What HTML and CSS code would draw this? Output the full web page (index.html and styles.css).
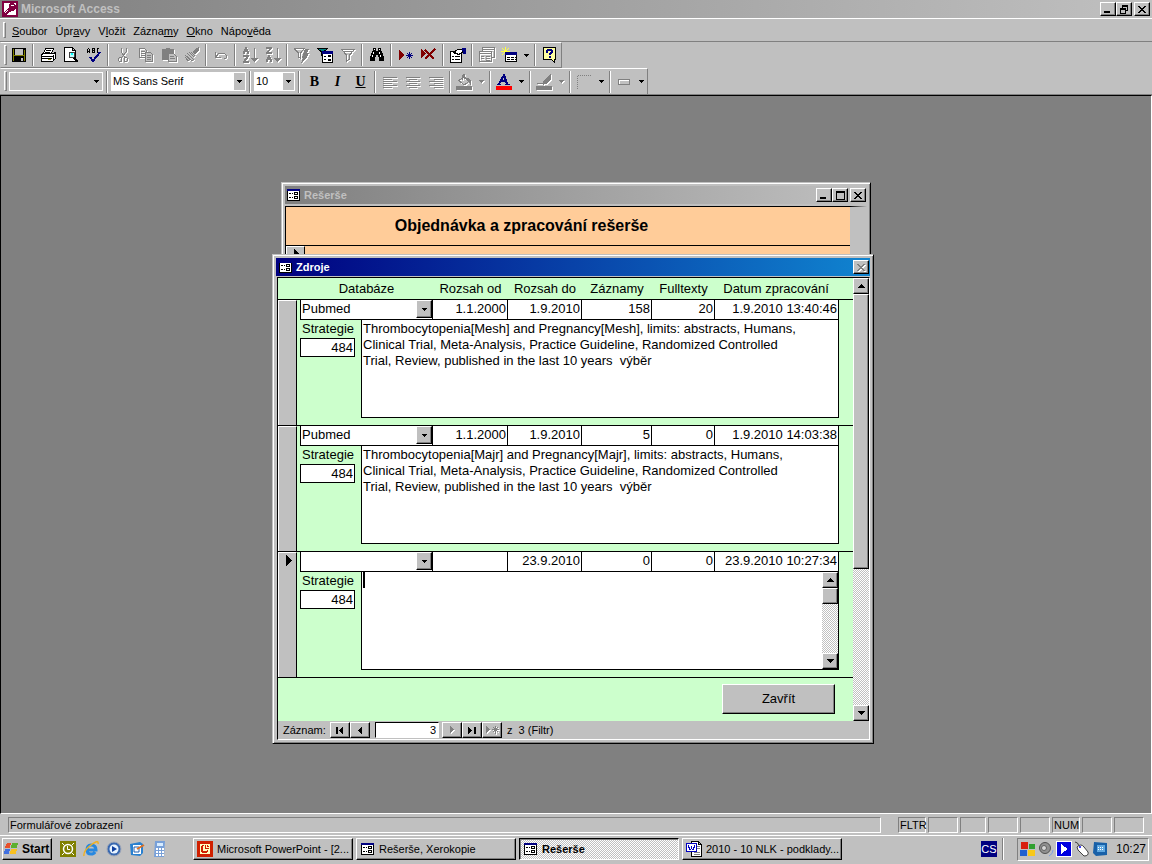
FILE: index.html
```html
<!DOCTYPE html>
<html lang="cs">
<head>
<meta charset="utf-8">
<title>Microsoft Access</title>
<link rel="stylesheet" href="styles.css">
</head>
<body>
<svg class="defs" aria-hidden="true">
  <symbol id="form" viewBox="0 0 13 12"><path fill="#fff" d="M0 0h13v12H0z"/><path fill="#000080" d="M0 0h13v2H0z"/><path fill="none" stroke="#000" d="M.5 2v9.500h12V2M7.500 3.500h3v2h-3zM7.500 7.500h3v2h-3zM2 4.500h2M5 4.500h1M2 8.500h2M5 8.500h1"/></symbol>
  <symbol id="down" viewBox="0 0 5 3"><path d="M0 0h5v1H4v1H3v1H2V2H1V1H0z"/></symbol>
  <symbol id="up" viewBox="0 0 7 4"><path d="M3 0h1v1h1v1h1v1h1v1H0V3h1V2h1V1h1z"/></symbol>
  <symbol id="sdown" viewBox="0 0 7 4"><path d="M0 0h7v1H6v1H5v1H4v1H3V3H2V2H1V1H0z"/></symbol>
  <symbol id="close" viewBox="0 0 8 7"><path d="M0 0h2v1h1v1h2V1h1V0h2v1H7v1H6v1H5v1h1v1h1v1h1v1H6V6H5V5H3v1H2v1H0V6h1V5h1V4h1V3H2V2H1V1H0z"/></symbol>
  <symbol id="min" viewBox="0 0 8 7"><path d="M0 5h6v2H0z"/></symbol>
  <symbol id="max" viewBox="0 0 9 9"><path fill-rule="evenodd" d="M0 0h9v9H0zM1 2v6h7V2z"/></symbol>
  <symbol id="restore" viewBox="0 0 8 9"><path fill-rule="evenodd" d="M2 0h6v6H6v3H0V3h2zM3 2v1h3v2h1V2zM1 5v3h4V5z"/></symbol>
  <symbol id="tri" viewBox="0 0 6 11"><path d="M0 0h1v1h1v1h1v1h1v1h1v1h1v1H5v1H4v1H3v1H2v1H1v1H0z"/></symbol>
  <symbol id="funnel" viewBox="0 0 16 16"><path fill="none" stroke="currentColor" d="M1.500 2.500h13l-5 5.500v4l-3 2V8zM4 4.500h8"/></symbol>
</svg>

<header class="titlebar appbar">
  <svg class="i16" viewBox="0 0 16 16"><path fill="#800040" d="M0 0h16v16H0z"/><path fill="#fff" d="M2 2h12v12H2z"/><path fill="#800040" d="M8 2h4v1h1v1h1v4h-1v1h-1v1H9v1H7v1H6v1H5v1H2v-3h1v-1h1V9h1V8h1V7h1V3h1z"/><path fill="#fff" d="M9 4h3v1H9zM3 11h1v1H3zM4 10h1v1H4zM5 9h1v1H5z"/></svg>
  <h1>Microsoft Access</h1>
  <span class="wbtns"><button aria-label="Minimalizovat"><svg width="8" height="7"><use href="#min"/></svg></button><button aria-label="Obnovit"><svg width="8" height="9"><use href="#restore"/></svg></button><button class="last" aria-label="Zavřít aplikaci"><svg width="8" height="7"><use href="#close"/></svg></button></span>
</header>

<nav class="menubar"><i class="grip"></i>
  <button><u>S</u>oubor</button><button>Úpr<u>a</u>vy</button><button>V<u>l</u>ožit</button><button>Zázna<u>m</u>y</button><button><u>O</u>kno</button><button>Nápo<u>v</u>ěda</button>
</nav>

<div class="dock">
<div class="toolbar std"><i class="grip"></i>
  <button class="tb" aria-label="Uložit"><svg viewBox="0 0 16 16"><path d="M1 1h14v14H1z"/><path fill="#808000" d="M2 2h1v12H2zM13 3h1v11h-1zM3 8h10v1H3z"/><path fill="#c0c0c0" d="M4 2h8v6H4zM10 11h2v3h-2z"/></svg></button><i class="sep"></i>
  <button class="tb" aria-label="Tisk"><svg viewBox="0 0 16 16"><path fill="#fff" stroke="#000" d="M5.500 1.500h8l-2 5h-8zM1.500 7.500l2-1h10l2-1v6l-3 3h-11z"/><path stroke="#000" d="M6 3.500h5M5 5.500h5M1 9.500h12M2 11.500h10M13 8v6M15 7v4"/><path stroke="#808000" d="M8 12.500h3"/></svg></button>
  <button class="tb" aria-label="Náhled"><svg viewBox="0 0 16 16"><path fill="#fff" stroke="#000" d="M1.500.5h8l3 3v11h-11zM9.500.5v3h3"/><circle cx="9" cy="8" r="3" fill="#c0ffff" stroke="#404040"/><path stroke="#000" stroke-width="2" d="M11 11l4 4"/><path fill="#0ff" d="M8 6h2v2H8z"/></svg></button>
  <button class="tb" aria-label="Pravopis"><svg viewBox="0 0 16 16"><path fill="none" stroke="#000" d="M1.500 6V2.500l1-1 1 1V6M2 4.500h1M6.500 1v4.500h2v-4h-2M6 3.500h2M13 1.500h-2v4h2"/><path fill="none" stroke="#000080" stroke-width="2" d="M4 10l3 4 7-9"/></svg></button><i class="sep"></i>
  <button class="tb off" disabled aria-label="Vyjmout"><svg viewBox="0 0 16 16"><path fill="none" stroke="#808080" d="M6 1v4l4 5M11 1v4l-4 5M4.500 10.500h2v4h-2l-1-1v-2zM9.500 10.500h2l1 1v2l-1 1h-2z"/></svg></button>
  <button class="tb off" disabled aria-label="Kopírovat"><svg viewBox="0 0 16 16"><path fill="none" stroke="#808080" d="M1.500 1.500h5l2 2v7h-7zM3 4.500h4M3 6.500h4M3 8.500h4"/><path fill="#c0c0c0" stroke="#808080" d="M7.500 5.500h5l2 2v7h-7zM9 8.500h4M9 10.500h4M9 12.500h4"/></svg></button>
  <button class="tb off" disabled aria-label="Vložit"><svg viewBox="0 0 16 16"><path fill="#808080" d="M1 2h4V1h4v1h4v11H1z"/><path fill="#c0c0c0" stroke="#808080" d="M7.500 6.500h5l3 3v5h-8zM9 9.500h4M9 11.500h5M4 3.500h6"/></svg></button>
  <button class="tb off" disabled aria-label="Kopírovat formát"><svg viewBox="0 0 16 16"><path fill="#808080" d="M12 1l3-1v3l-4 5-3-3z"/><path fill="none" stroke="#808080" d="M3 6l6 6M1 8l7 6M5 5l5 5M1 10l4 4M2 12l3 2M7 5l4 4M8 14l2-2"/></svg></button><i class="sep"></i>
  <button class="tb off" disabled aria-label="Zpět"><svg viewBox="0 0 16 16"><path fill="none" stroke="#808080" d="M2.500 5v5.500h5M3 10l3-4h5l2 2v3l-2 1"/></svg></button><i class="sep"></i>
  <button class="tb off" disabled aria-label="Seřadit vzestupně"><svg viewBox="0 0 16 16"><path fill="#808080" d="M3 0h2v2h1v2h1v3H5V5H3v2H1V4h1V2h1zM1 8h6v2H6v2H5v1H4v1h3v2H1v-2h1v-2h1v-1h1v-1H1zM12 1h1v10h3v1h-1v1h-1v1h-1v1h-1v-1h-1v-1h-1v-1H9v-1h3z"/></svg></button>
  <button class="tb off" disabled aria-label="Seřadit sestupně"><svg viewBox="0 0 16 16"><path fill="#808080" d="M1 0h6v2H6v1H5v1H4v1h3v2H1V5h1V4h1V3h1V2H1zM3 8h2v2h1v2h1v3H5v-2H3v2H1v-3h1v-2h1zM12 1h1v10h3v1h-1v1h-1v1h-1v1h-1v-1h-1v-1h-1v-1H9v-1h3z"/></svg></button><i class="sep"></i>
  <button class="tb off" disabled aria-label="Filtr podle výběru"><svg viewBox="0 0 16 16"><path fill="none" stroke="#808080" d="M0 1.500h10L6.500 6v5l-2-1V6z"/><path fill="#808080" d="M11 2h4l-2 4h2l-2 4-6 6 2-5H8z"/></svg></button>
  <button class="tb" aria-label="Filtr podle formuláře"><svg viewBox="0 0 16 16"><path fill="#008080" stroke="#000" d="M.5 1.500h10L6.500 5v4l-2-1V5z"/><path fill="#fff" stroke="#000" d="M5.500 5.500h10v10h-10z"/><path fill="#000080" d="M5 4h11v3H5z"/><path fill="none" stroke="#000" d="M7 9.500h2M7 12.500h2M11.500 8.500h2v1h-2zM11.500 12.500h2v1h-2z"/></svg></button>
  <button class="tb off" disabled aria-label="Použít filtr"><svg viewBox="0 0 16 16"><use href="#funnel"/></svg></button><i class="sep"></i>
  <button class="tb" aria-label="Najít"><svg viewBox="0 0 16 16"><path d="M4 1h3v3h2V1h3v3h1v2h1v3h1v5h-5v-4H9V8H7v2H6v4H1V9h1V6h1V4h1z"/><path fill="#fff" d="M4 5h1v2H4zM3 8h1v2H3zM10 5h1v2h-1zM11 8h1v2h-1zM5 2h1v1H5zM10 2h1v1h-1z"/></svg></button><i class="sep"></i>
  <button class="tb" aria-label="Nový záznam"><svg viewBox="0 0 16 16"><path fill="#800000" d="M1 3l5 5-5 5z"/><path stroke="#000080" d="M11.500 5v7M8 8.500h7M9 6l5 5M14 6l-5 5"/></svg></button>
  <button class="tb" aria-label="Odstranit záznam"><svg viewBox="0 0 16 16"><path fill="#800000" d="M0 2l5 5-5 4z"/><path fill="none" stroke="#800000" stroke-width="2" d="M4 3l9 9M14 2L4 12"/></svg></button><i class="sep"></i>
  <button class="tb" aria-label="Vlastnosti"><svg viewBox="0 0 16 16"><path fill="#fff" stroke="#000" d="M.5 4.500h11v11H.5z"/><path stroke="#000" d="M2 9.500h2M5 9.500h5M2 12.500h2M5 12.500h5M3 6l4-3 4 1-3 4"/><path fill="#fff" stroke="#000" d="M4.500 5.500l3-3h5v3l-4 2z"/><path fill="#000080" d="M12 1h4v6h-3z"/></svg></button><i class="sep"></i>
  <button class="tb off" disabled aria-label="Okno databáze"><svg viewBox="0 0 16 16"><path fill="none" stroke="#808080" d="M3.500 4V.5h12v10H13M4 2.500h11M.5 4.500h12v10H.5zM1 6.500h11M2 9.500h3M2 11.500h3M7 9.500h4M7 11.500h4M7 13.500h4"/></svg></button>
  <button class="tb wide" aria-label="Nový objekt"><svg viewBox="0 0 16 16"><path stroke="#ffff40" d="M4.500 0v9M0 4.500h9M1 1l7 7M8 1L1 8"/><path fill="#fff" stroke="#000" d="M4.500 5.500h11v9h-11z"/><path fill="#000080" d="M4 5h12v3H4z"/><path stroke="#000" stroke-dasharray="3 1" d="M6 10.500h9M6 12.500h9"/></svg><svg class="dd"><use href="#down"/></svg></button><i class="sep"></i>
  <button class="tb" aria-label="Nápověda"><svg viewBox="0 0 16 16"><path fill="#ffffa0" stroke="#000" d="M1.500.5h12v12h-1v3l-3-3h-8z"/><path fill="#000080" d="M4 3h1V2h5v1h1v3h-1v1H9v1H7V6h1V5h1V4H6v2H4zM7 9h2v2H7z"/></svg></button>
</div>
<div class="toolbar fmt"><i class="grip"></i>
  <span class="cb style"><select disabled aria-label="Objekt"><option></option></select><svg class="dd"><use href="#down"/></svg></span><i class="sep"></i>
  <span class="cb font"><select aria-label="Písmo"><option>MS Sans Serif</option></select><svg class="dd"><use href="#down"/></svg></span><i class="sep"></i>
  <span class="cb size"><select aria-label="Velikost písma"><option>10</option></select><svg class="dd"><use href="#down"/></svg></span><i class="sep"></i>
  <button class="tb glyph">B</button><button class="tb glyph it">I</button><button class="tb glyph un">U</button><i class="sep"></i>
  <button class="tb off" disabled aria-label="Vlevo"><svg viewBox="0 0 16 16"><path stroke="#808080" d="M1 3.500h14M1 5.500h9M1 7.500h14M1 9.500h9M1 11.500h14M1 13.500h9"/></svg></button>
  <button class="tb off" disabled aria-label="Na střed"><svg viewBox="0 0 16 16"><path stroke="#808080" d="M1 3.500h14M4 5.500h8M1 7.500h14M4 9.500h8M1 11.500h14M4 13.500h8"/></svg></button>
  <button class="tb off" disabled aria-label="Vpravo"><svg viewBox="0 0 16 16"><path stroke="#808080" d="M1 3.500h14M6 5.500h9M1 7.500h14M6 9.500h9M1 11.500h14M6 13.500h9"/></svg></button><i class="sep"></i>
  <button class="tb wide off" disabled aria-label="Barva výplně"><svg viewBox="0 0 16 16"><path fill="#808080" d="M0 12h16v4H0zM11 4h2l2 3v4h-1l-1-4z"/><path fill="none" stroke="#808080" d="M3 6.500l5-4 5 5-5 3.500zM6.500 6V1.500l2-1V5"/></svg><svg class="dd"><use href="#down"/></svg></button><i class="sep"></i>
  <button class="tb wide" aria-label="Barva písma"><svg viewBox="0 0 16 16"><path fill="red" d="M0 12h16v4H0z"/><path fill="none" stroke="#000080" stroke-width="2" d="M3 10l5-9 3 9M5 7h5"/><path stroke="#000080" d="M1 10.500h4M9 10.500h5"/></svg><svg class="dd"><use href="#down"/></svg></button><i class="sep"></i>
  <button class="tb wide off" disabled aria-label="Barva čáry"><svg viewBox="0 0 16 16"><path fill="#808080" d="M0 12h16v4H0zM15 0v5l-5 5H7V8l5-6z"/><path fill="none" stroke="#808080" d="M1 9.500h5l2 1"/></svg><svg class="dd"><use href="#down"/></svg></button><i class="sep"></i>
  <button class="tb wide" aria-label="Ohraničení"><svg viewBox="0 0 16 16"><path fill="none" stroke="#808080" stroke-dasharray="1 1" d="M1.500 15V1.500H15"/></svg><svg class="dd"><use href="#down"/></svg></button><i class="sep"></i>
  <button class="tb wide" aria-label="Zvláštní efekt"><svg viewBox="0 0 16 16"><path fill="none" stroke="#fff" d="M3.500 6.500h10v4h-10z"/><path fill="none" stroke="#808080" d="M2.500 5.500h11v5h-11z"/></svg><svg class="dd"><use href="#down"/></svg></button>
</div>
</div>

<main class="mdi">
  <section class="win back" aria-label="Rešerše">
    <div class="titlebar">
      <svg class="ficon"><use href="#form"/></svg><h2>Rešerše</h2>
      <span class="wbtns"><button aria-label="Minimalizovat okno"><svg width="8" height="7"><use href="#min"/></svg></button><button aria-label="Maximalizovat okno"><svg width="9" height="9"><use href="#max"/></svg></button><button class="last" aria-label="Zavřít okno"><svg width="8" height="7"><use href="#close"/></svg></button></span>
    </div>
    <div class="client orange">
      <h3>Objednávka a zpracování rešerše</h3>
      <div class="detail"><span class="selector"><svg width="6" height="11"><use href="#tri"/></svg></span></div>
    </div>
  </section>

  <section class="win front" aria-label="Zdroje">
    <div class="titlebar active">
      <svg class="ficon"><use href="#form"/></svg><h2>Zdroje</h2>
      <span class="wbtns"><button class="last off" disabled aria-label="Zavřít okno Zdroje"><svg width="8" height="7"><use href="#close"/></svg></button></span>
    </div>
    <div class="client">
      <div class="body">
        <div class="form">
          <div class="heads"><span>Databáze</span><span>Rozsah od</span><span>Rozsah do</span><span>Záznamy</span><span>Fulltexty</span><span>Datum zpracování</span></div>
          <article class="record">
            <span class="selector"></span>
            <div class="fields">
              <div class="cells">
                <span class="combo"><select aria-label="Databáze"><option>Pubmed</option></select><b><svg class="dd"><use href="#down"/></svg></b></span>
                <input aria-label="Rozsah od" value="1.1.2000"><input aria-label="Rozsah do" value="1.9.2010"><input aria-label="Záznamy" value="158"><input aria-label="Fulltexty" value="20"><input aria-label="Datum zpracování" value="1.9.2010 13:40:46">
              </div>
              <div class="strategy">
                <div class="side"><label for="s1">Strategie</label><input id="s1" value="484"></div>
                <div class="memo"><textarea aria-label="Text strategie" wrap="off">Thrombocytopenia[Mesh] and Pregnancy[Mesh], limits: abstracts, Humans,
Clinical Trial, Meta-Analysis, Practice Guideline, Randomized Controlled
Trial, Review, published in the last 10 years  výběr</textarea></div>
              </div>
            </div>
          </article>
          <article class="record">
            <span class="selector"></span>
            <div class="fields">
              <div class="cells">
                <span class="combo"><select aria-label="Databáze"><option>Pubmed</option></select><b><svg class="dd"><use href="#down"/></svg></b></span>
                <input aria-label="Rozsah od" value="1.1.2000"><input aria-label="Rozsah do" value="1.9.2010"><input aria-label="Záznamy" value="5"><input aria-label="Fulltexty" value="0"><input aria-label="Datum zpracování" value="1.9.2010 14:03:38">
              </div>
              <div class="strategy">
                <div class="side"><label for="s2">Strategie</label><input id="s2" value="484"></div>
                <div class="memo"><textarea aria-label="Text strategie" wrap="off">Thrombocytopenia[Majr] and Pregnancy[Majr], limits: abstracts, Humans,
Clinical Trial, Meta-Analysis, Practice Guideline, Randomized Controlled
Trial, Review, published in the last 10 years  výběr</textarea></div>
              </div>
            </div>
          </article>
          <article class="record">
            <span class="selector"><svg width="6" height="11"><use href="#tri"/></svg></span>
            <div class="fields">
              <div class="cells">
                <span class="combo"><select aria-label="Databáze"><option></option></select><b><svg class="dd"><use href="#down"/></svg></b></span>
                <input aria-label="Rozsah od" value=""><input aria-label="Rozsah do" value="23.9.2010"><input aria-label="Záznamy" value="0"><input aria-label="Fulltexty" value="0"><input aria-label="Datum zpracování" value="23.9.2010 10:27:34">
              </div>
              <div class="strategy">
                <div class="side"><label for="s3">Strategie</label><input id="s3" value="484"></div>
                <div class="memo"><i class="caret"></i><textarea aria-label="Text strategie"></textarea>
                  <div class="scroll"><button aria-label="Nahoru"><svg width="7" height="4"><use href="#up"/></svg></button><span class="thumb short"></span><button class="end" aria-label="Dolů"><svg width="7" height="4"><use href="#sdown"/></svg></button></div>
                </div>
              </div>
            </div>
          </article>
          <footer class="foot"><button>Zavřít</button></footer>
        </div>
        <div class="scroll"><button aria-label="Posun nahoru"><svg width="7" height="4"><use href="#up"/></svg></button><span class="thumb long"></span><button class="end" aria-label="Posun dolů"><svg width="7" height="4"><use href="#sdown"/></svg></button></div>
      </div>
      <div class="recnav">
        <label for="rec">Záznam:</label>
        <button aria-label="První"><svg width="8" height="7"><path d="M0 0h2v7H0zM7 0v7H6V6H5V5H4V4H3V3h1V2h1V1h1V0z"/></svg></button><button aria-label="Předchozí"><svg width="4" height="7"><path d="M4 0v7H3V6H2V5H1V4H0V3h1V2h1V1h1V0z"/></svg></button>
        <input id="rec" value="3">
        <button class="off" disabled aria-label="Další"><svg width="5" height="8"><path d="M0 0h1v1h1v1h1v1h1v1H3v1H2v1H1v1H0z"/></svg></button><button aria-label="Poslední"><svg width="8" height="7"><path d="M6 0h2v7H6zM0 0h1v1h1v1h1v1h1v1H3v1H2v1H1v1H0z"/></svg></button><button class="off" disabled aria-label="Nový"><svg width="13" height="8"><path d="M0 0h1v1h1v1h1v1h1v1H3v1H2v1H1v1H0z"/><path stroke="#808080" d="M9.500 0v8M6 3.500h7M7 1l5 5M12 1L7 6"/></svg></button>
        <span class="total">z&nbsp; 3 (Filtr)</span>
      </div>
    </div>
  </section>
</main>

<div class="status"><span class="msg">Formulářové zobrazení</span><span class="ind w28">FLTR</span><span class="ind w30"></span><span class="ind w26"></span><span class="ind w30"></span><span class="ind w30"></span><span class="ind w28">NUM</span><span class="ind w30"></span><span class="ind w30"></span></div>

<footer class="taskbar">
  <button class="start"><svg class="i16" viewBox="0 0 16 16"><path fill="#e8502c" d="M2 3q3-2 5-1L6 7Q4 6 1 7z"/><path fill="#5cb030" d="M8 2q3 1 6 0l-1 5q-3 1-6 0z"/><path fill="#4070e0" d="M1 8q3-1 5 0l-1 5q-2-1-5 0z"/><path fill="#f8c020" d="M7 8q3 1 6 0l-1 5q-3 1-6 0z"/></svg>Start</button>
  <div class="quick">
    <button aria-label="Hodiny"><svg class="i16 soft" viewBox="0 0 16 16"><path fill="#808000" d="M0 0h16v16H0z"/><circle cx="8" cy="8" r="4.500" fill="none" stroke="#fff" stroke-width="1.500"/><path fill="none" stroke="#fff" d="M2 2l2 2M14 2l-2 2M2 14l2-2M14 14l-2-2M7.500 5v3.500H10"/></svg></button>
    <button aria-label="Internet Explorer"><svg class="i16 soft" viewBox="0 0 16 16"><path fill="none" stroke="#2888e0" stroke-width="3" d="M4 9h9q0-5-5-5-4 0-4 5 0 4 4 4 3 0 4-2"/><path fill="none" stroke="#f0b020" stroke-width="1.500" d="M1 15q-1-5 7-11t7-1"/></svg></button>
    <button aria-label="Přehrávač"><svg class="i16 soft" viewBox="0 0 16 16"><circle cx="8" cy="8" r="7" fill="#3868b0" stroke="#a0a8b8"/><circle cx="8" cy="8" r="4.500" fill="#e8f4ff"/><path fill="#1040a0" d="M6 5l5 3-5 3z"/></svg></button>
    <button aria-label="Outlook"><svg class="i16 soft" viewBox="0 0 16 16"><path fill="#2880d0" d="M1 3l10-2 3 2v9l-3 3-9-1z"/><path fill="#fff" d="M4 4h8v9H4z"/><path fill="none" stroke="#2060b0" d="M5 6h5v5H5z"/><path stroke="#e07020" stroke-width="2" d="M8 8l7-4"/></svg></button>
    <button aria-label="Kalkulačka"><svg class="i16 soft" viewBox="0 0 16 16"><path fill="#78a0d8" d="M3 0h10l-1 16H2z"/><path fill="#d8ecff" d="M5 2h6v3H5z"/><path stroke="#fff" stroke-width="2" stroke-dasharray="2 1" d="M4 8h8M4 11h8M4 14h8"/></svg></button>
  </div>
  <div class="tasks">
    <button><svg class="i16" viewBox="0 0 16 16"><path fill="#d02000" d="M0 0h16v16H0z"/><path fill="#ffffc0" d="M3 3h10v10H3z"/><path fill="#d02000" d="M5 4h2v1H6v5h4V9h1v2h-1v1H5v-1H4V5h1zM8 4h1v3h3v1H8zM10 4h1v1h1v1h-2z"/></svg>Microsoft PowerPoint - [2...</button>
    <button><svg class="ficon"><use href="#form"/></svg>Rešerše, Xerokopie</button>
    <button class="pressed"><svg class="ficon"><use href="#form"/></svg>Rešerše</button>
    <button><svg class="i16" viewBox="0 0 16 16"><path fill="#fff" stroke="#000" d="M5.500.5h7l3 3v12h-10zM12.500.5v3h3"/><path stroke="#808080" d="M11 5.500h3M11 7.500h3M8 11.500h6M8 13.500h6"/><path fill="#fff" stroke="#0000c0" d="M.5 2.500h10v8H.5z"/><path fill="#0000c0" d="M2 4h1v2h1v2h1V5h1v3h1V6h1V4h1v3H8v2H6V8H5v1H3V7H2z"/></svg>2010 - 10 NLK - podklady...</button>
  </div>
  <span class="lang">CS</span><i class="sep"></i>
  <div class="tray">
    <svg class="i16" viewBox="0 0 16 16"><path fill="#d82010" d="M1 1h7v7H1z"/><path fill="#30a030" d="M9 3h6v5H9z"/><path fill="#2060d0" d="M0 9h7v6H0z"/><path fill="#f8c818" d="M8 9h7v6H8z"/></svg>
    <svg class="i16 soft" viewBox="0 0 16 16"><circle cx="7" cy="7" r="5.500" fill="#909090" stroke="#505050"/><circle cx="6" cy="7" r="2.500" fill="#d8d8d8" stroke="#606060"/><path fill="none" stroke="#80a0e0" d="M11 15q4-2 4-6"/></svg>
    <svg class="i16" viewBox="0 0 16 16"><path fill="#fff" d="M0 0h16v16H0z"/><path fill="#0000e0" d="M1 1h14v14H1z"/><path fill="#fff" d="M5 3l7 5-7 5z"/></svg>
    <svg class="i16 soft" viewBox="0 0 16 16"><path fill="none" stroke="#404040" d="M1 1q3 0 4 4"/><path fill="#fff" stroke="#404040" d="M3 6q4-4 7 0l4 5q1 4-4 4L4 9z"/><circle cx="6" cy="6" r="1" fill="#00f"/></svg>
    <svg class="i16 soft" viewBox="0 0 16 16"><path fill="#1860a8" d="M2 1l13 1v12l-11 1-3-3z"/><path fill="#60a8e0" d="M5 4h8v7H5z"/><path stroke="#fff" stroke-dasharray="1 1" d="M6 6.500h6M6 8.500h6"/></svg>
    <time>10:27</time>
  </div>
</footer>
</body>
</html>
```
FILE: styles.css
```css
* { box-sizing: border-box; }
html, body { height: 100%; margin: 0; }
body { display: flex; flex-direction: column; background: #c0c0c0; color: #000; font: 11px "Liberation Sans", Arial, sans-serif; overflow: hidden; }
button, input, select, textarea { margin: 0; padding: 0; border: 0; border-radius: 0; background: none; color: #000; font: inherit; appearance: none; outline: 0; opacity: 1; }
svg { display: block; flex: none; shape-rendering: crispEdges; }
h1, h2, h3 { margin: 0; }
.defs { position: absolute; width: 0; height: 0; }
.i16 { width: 16px; height: 16px; }
.soft { shape-rendering: auto; }
.ficon { width: 13px; height: 12px; }
.dd { width: 5px; height: 3px; }
.off svg { fill: #808080; color: #808080; filter: drop-shadow(1px 1px 0 #fff); }

.titlebar { display: flex; align-items: center; height: 18px; gap: 3px; padding: 0 2px; background: linear-gradient(90deg, #808080, #c0c0c0); color: #c0c0c0; }
.titlebar.active { background: linear-gradient(90deg, #000080, #1084d0); color: #fff; }
.titlebar h1, .titlebar h2 { font-size: 12px; line-height: 16px; }
.titlebar h2 { font-size: 11px; }
.wbtns { display: flex; margin-left: auto; }
.wbtns button { display: flex; align-items: center; justify-content: center; width: 16px; height: 14px; }
.wbtns .last { margin-left: 2px; }
.wbtns button, .scroll button, .thumb, .recnav button, .foot button, .taskbar .start, .tasks button { background: #c0c0c0; border: 1px solid; border-color: #fff #000 #000 #fff; box-shadow: inset -1px -1px #808080; }

.menubar { display: flex; flex: none; height: 24px; padding: 1px 0 0 3px; border-top: 1px solid #fff; border-bottom: 1px solid #808080; }
.menubar button { padding: 0 4px; }
.grip { flex: none; width: 3px; margin: 2px 2px 3px 0; border: 1px solid; border-color: #fff #808080 #808080 #fff; }
.dock { flex: none; }
.toolbar { display: flex; width: max-content; height: 26px; padding: 0 0 0 3px; align-items: center; border: 1px solid; border-color: #fff #808080 #808080 transparent; }
.toolbar .grip { height: 20px; }
.std .grip { margin-right: 0; }
.fmt { height: 27px; }
.sep { flex: none; width: 2px; height: 22px; margin: 0 2px; border-left: 1px solid #808080; border-right: 1px solid #fff; }
.cb + .sep { margin: 0 3px; }
.tb { display: flex; align-items: center; justify-content: center; width: 23px; height: 22px; }
.tb > svg:first-child { width: 16px; height: 16px; }
.tb.wide { width: 34px; gap: 7px; }
.glyph { font: bold 14px "Liberation Serif", serif; }
.it { font-style: italic; }
.un { text-decoration: underline; }
.cb { display: flex; height: 19px; align-items: center; border: 1px solid #fff; background: #fff; }
.cb select { flex: 1; min-width: 0; height: 17px; padding: 0 0 2px 1px; }
.cb .dd { box-sizing: content-box; padding: 7px 3px; background: #c0c0c0; }
.cb.style { width: 94px; background: #c0c0c0; }
.cb.font { width: 135px; }
.cb.size { width: 41px; }

.mdi { position: relative; flex: 1; min-height: 0; overflow: hidden; background: #808080; border: 1px solid; border-color: #000 #fff #fff #000; box-shadow: 0 -1px #808080; }
.win { position: absolute; display: flex; flex-direction: column; padding: 3px; background: #c0c0c0; border: 1px solid; border-color: #c0c0c0 #000 #000 #c0c0c0; box-shadow: inset 1px 1px #fff, inset -1px -1px #808080; }
.back { left: 280px; top: 86px; width: 590px; height: 240px; }
.front { left: 271px; top: 158px; width: 602px; height: 490px; }
.win .titlebar { flex: none; gap: 4px; padding: 0 1px 0 3px; }
.back .titlebar { padding-left: 2px; }
.client { flex: 1; display: flex; flex-direction: column; margin: 1px 0 0 1px; border: 1px solid; border-color: #000 #fff #fff #000; }
.orange { margin: 2px 0 0; background: #ffcc99; border-right: 17px solid #c0c0c0; }
.orange h3 { height: 39px; padding-right: 93px; border-bottom: 1px solid #000; font-size: 16px; line-height: 38px; text-align: center; }
.selector { width: 19px; background: #c0c0c0; border-left: 1px solid #fff; border-top: 1px solid #fff; border-right: 1px solid #000; }
.selector svg { margin: 2px 0 0 7px; }
.detail { flex: 1; display: flex; }

.body { display: flex; flex: 1; background: #ccffcc; font-size: 13px; }
.form { flex: 1; min-width: 0; display: flex; flex-direction: column; }
.heads, .cells { display: grid; grid-template-columns: 133px 75px 74px 70px 63px 1fr; }
.heads { height: 22px; padding: 0 16px 0 22px; border-bottom: 1px solid #000; line-height: 22px; text-align: center; }
.record { display: flex; height: 126px; border-bottom: 1px solid #000; }
.fields { flex: 1; min-width: 0; padding: 0 14px 0 3px; display: flex; flex-direction: column; }
.cells { height: 20px; border-left: 1px solid #000; border-bottom: 1px solid #000; background: #fff; grid-template-columns: 132px 75px 74px 70px 63px 1fr; }
.cells input { min-width: 0; height: 19px; border-right: 1px solid #000; text-align: right; padding: 0 1px 2px 0; }
.combo { display: flex; height: 19px; border-right: 1px solid #000; }
.combo select { flex: 1; min-width: 0; padding: 0 0 2px 1px; }
.combo b { display: flex; align-items: center; justify-content: center; width: 16px; height: 18px; background: #c0c0c0; border: 1px solid; border-color: #fff #000 #000 #fff; box-shadow: inset -1px -1px #808080; }
.strategy { display: flex; justify-content: space-between; height: 98px; }
.side { width: 61px; display: flex; flex-direction: column; }
.side label { height: 18px; padding-left: 2px; line-height: 18px; }
.side input { width: 55px; height: 19px; border: 1px solid #000; background: #fff; text-align: right; padding: 0 1px 0 0; }
.memo { flex: 1; position: relative; display: flex; border: 1px solid #000; border-top: 0; background: #fff; }
.memo textarea { flex: 1; min-width: 0; resize: none; overflow: hidden; padding: 1px 1px 0; line-height: 16px; }
.caret { position: absolute; left: 1px; top: 0; width: 2px; height: 16px; background: #000; }
.scroll { display: flex; flex-direction: column; flex: none; width: 16px; background: repeating-conic-gradient(#fff 0 25%, #c0c0c0 0 50%) 0 0 / 2px 2px; }
.scroll button { display: flex; align-items: center; justify-content: center; height: 16px; width: 16px; }
.scroll .end { margin-top: auto; }
.thumb.short { height: 16px; }
.thumb.long { height: 275px; }
.foot { flex: 1; display: flex; justify-content: flex-end; align-items: flex-start; padding: 6px 18px 0 0; }
.foot button { width: 113px; height: 30px; padding-bottom: 2px; }
.recnav { display: flex; align-items: center; height: 18px; padding-left: 5px; background: #c0c0c0; }
.recnav label { width: 47px; }
.recnav button { display: flex; align-items: center; justify-content: center; width: 20px; height: 16px; }
.recnav input { width: 64px; height: 16px; margin: 0 3px 0 5px; padding-right: 2px; background: #fff; border: 1px solid; border-color: #000 #fff #fff #000; text-align: right; }
.total { margin-left: 5px; }

.status { display: flex; flex: none; height: 22px; padding: 3px 8px 2px; gap: 2px; border-bottom: 1px solid #fff; }
.msg { flex: 1; margin-right: 15px; }
.msg, .ind { border: 1px solid; border-color: #808080 #fff #fff #808080; line-height: 15px; padding-left: 1px; white-space: nowrap; }
.w26 { width: 26px; }
.w28 { width: 28px; }
.w30 { width: 30px; }

.taskbar { display: flex; flex: none; align-items: center; height: 28px; padding: 0 3px 2px 2px; }
.taskbar .start { display: flex; align-items: center; gap: 2px; width: 50px; height: 22px; padding-left: 1px; font-size: 12px; font-weight: bold; }
.quick { display: flex; gap: 7px; margin-left: 8px; }
.tasks { display: flex; flex: 1; gap: 3px; margin: 0 20px 0 25px; }
.tasks button { flex: 0 1 160px; display: flex; align-items: center; gap: 4px; min-width: 0; height: 22px; padding-left: 3px; white-space: nowrap; overflow: hidden; }
.tasks .ficon { margin: 0 1px; }
.tasks .pressed { font-weight: bold; background: repeating-conic-gradient(#fff 0 25%, #c0c0c0 0 50%) 0 0 / 2px 2px; border-color: #000 #fff #fff #000; box-shadow: inset 1px 1px #808080; }
.lang { width: 16px; height: 16px; background: #000080; color: #fff; line-height: 16px; text-align: center; }
.taskbar .sep { margin: 0 13px 0 5px; }
.tray { display: flex; align-items: center; gap: 2px; width: 132px; height: 23px; padding: 0 2px; border: 1px solid; border-color: #808080 #fff #fff #808080; }
.tray time { margin-left: 6px; font-size: 12px; }
```
